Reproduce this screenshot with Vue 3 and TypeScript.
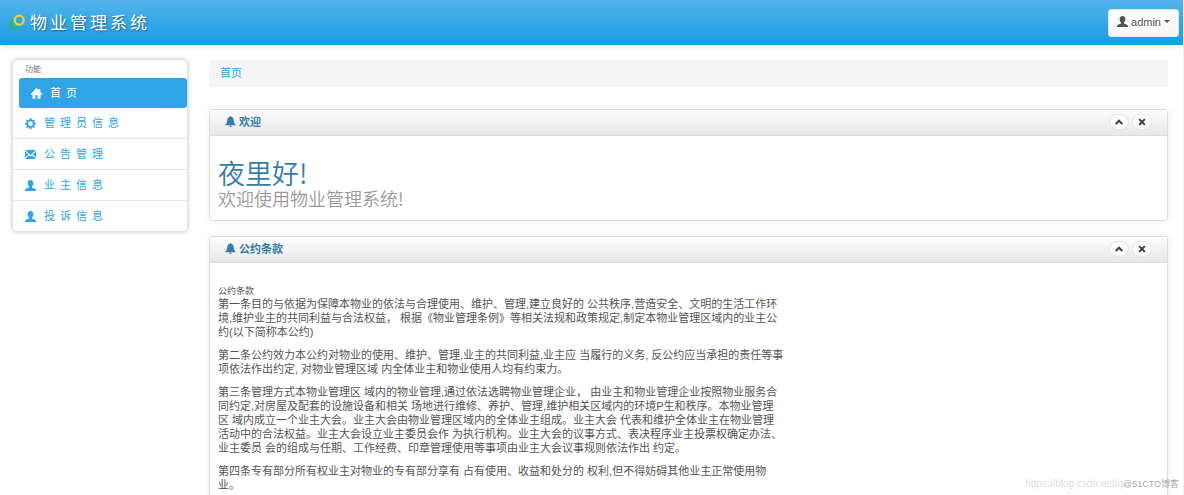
<script setup lang="ts">
import { ref } from 'vue'

type Icon = 'home' | 'cog' | 'mail' | 'user'

interface MenuItem {
  label: string
  icon: Icon
}

const menu: MenuItem[] = [
  { label: '首页', icon: 'home' },
  { label: '管理员信息', icon: 'cog' },
  { label: '公告管理', icon: 'mail' },
  { label: '业主信息', icon: 'user' },
  { label: '投诉信息', icon: 'user' },
]

const shapes: Record<Icon, string> = {
  home: 'M8 0 -0.5 8.8 0.4 9.8H2.2V15.5H6.4V10.4H9.6V15.5H13.8V9.8H15.6L16.5 8.8 13.6 5.8V1.4H11.2V3.3Z',
  cog: 'M6.7 0.5H9.3L9.8 2.7 11 3.2 12.9 2 14.5 3.6 13.3 5.4 13.8 6.7 16 7.1V9.4L13.8 9.9 13.3 11.1 14.5 13 12.9 14.6 11 13.4 9.8 13.9 9.3 16H6.7L6.2 13.9 5 13.4 3.1 14.6 1.5 13 2.7 11.1 2.2 9.9 0 9.4V7.1L2.2 6.7 2.7 5.4 1.5 3.6 3.1 2 5 3.2 6.2 2.7ZM8 4.8A3.4 3.4 0 1 0 8 11.6 3.4 3.4 0 1 0 8 4.8Z',
  mail: 'M0 1.5H16L8 8.6ZM0 3.6 5 8.1 0 12.6ZM16 3.6V12.6L11 8.1ZM6 9.1 8 10.9 10 9.1 16 14.5H0Z',
  user: 'M8 0C10.8 0 12.2 1.9 12.2 4.8 12.2 7 11.2 8.4 10.2 9.5V10.8C12 11.8 16 12.2 16 15V16H0V15C0 12.2 4 11.8 5.8 10.8V9.5C4.8 8.4 3.8 7 3.8 4.8 3.8 1.9 5.2 0 8 0Z',
}

const bell = 'M6.9 1.2A1.1 1.1 0 0 1 9.1 1.2C11.8 2 12.6 4.3 12.8 7 13 9.5 13.6 11 15.4 12.4V13.4H0.6V12.4C2.4 11 3 9.5 3.2 7 3.4 4.3 4.2 2 6.9 1.2ZM6.3 14.2H9.7A1.7 1.7 0 0 1 6.3 14.2Z'
const chevron = 'M8 2.5 16 10.3 13 13.3 8 8.4 3 13.3 0 10.3Z'
const cross = 'M3.6 0.8 8 5.2 12.4 0.8 15.2 3.6 10.8 8 15.2 12.4 12.4 15.2 8 10.8 3.6 15.2 0.8 12.4 5.2 8 0.8 3.6Z'

const rules: string[] = [
  '第一条目的与依据为保障本物业的依法与合理使用、维护、管理,建立良好的 公共秩序,营造安全、文明的生活工作环\n境,维护业主的共同利益与合法权益， 根据《物业管理条例》等相关法规和政策规定,制定本物业管理区域内的业主公\n约(以下简称本公约)',
  '第二条公约效力本公约对物业的使用、维护、管理,业主的共同利益,业主应 当履行的义务, 反公约应当承担的责任等事\n项依法作出约定, 对物业管理区域 内全体业主和物业使用人均有约束力。',
  '第三条管理方式本物业管理区 域内的物业管理,通过依法选聘物业管理企业， 由业主和物业管理企业按照物业服务合\n同约定,对房屋及配套的设施设备和相关 场地进行维修、养护、管理,维护相关区域内的环境P生和秩序。本物业管理\n区 域内成立一个业主大会。业主大会由物业管理区域内的全体业主组成。业主大会 代表和维护全体业主在物业管理\n活动中的合法权益。业主大会设立业主委员会作 为执行机构。业主大会的议事方式、表决程序业主投票权确定办法、\n业主委员 会的组成与任期、工作经费、印章管理使用等事项由业主大会议事规则依法作出 约定。',
  '第四条专有部分所有权业主对物业的专有部分享有 占有使用、收益和处分的 权利,但不得妨碍其他业主正常使用物\n业。',
]

const panels = [
  { id: 'welcome', title: '欢迎' },
  { id: 'rules', title: '公约条款' },
]

const active = ref(0)
const collapsed = ref<string[]>([])
const closed = ref<string[]>([])

function toggle(id: string): void {
  collapsed.value = collapsed.value.includes(id)
    ? collapsed.value.filter((c) => c !== id)
    : [...collapsed.value, id]
}
</script>

<template>
  <div class="page">
    <header class="navbar">
      <a class="brand" href="#">
        <svg class="logo" viewBox="0 0 16 16" aria-hidden="true">
          <circle cx="5.4" cy="10.2" r="4.2" fill="none" stroke="#23bd53" stroke-width="2.2" />
          <circle cx="10.2" cy="6.2" r="4.5" fill="#3aa4df" stroke="#f1cf34" stroke-width="2.2" />
        </svg>
        <span>物业管理系统</span>
      </a>
      <button class="account" type="button">
        <svg class="icon" viewBox="0 0 16 16" aria-hidden="true"><path :d="shapes.user" /></svg>
        <span>admin</span>
        <i class="caret"></i>
      </button>
    </header>

    <div class="columns">
      <nav class="sidebar">
        <h2 class="menu-title">功能</h2>
        <ul class="menu">
          <li v-for="(item, i) in menu" :key="item.label">
            <a href="#" :class="{ active: i === active }" @click.prevent="active = i">
              <svg class="icon" viewBox="0 0 16 16" aria-hidden="true">
                <path :d="shapes[item.icon]" fill-rule="evenodd" />
              </svg>
              <span>{{ item.label }}</span>
            </a>
          </li>
        </ul>
      </nav>

      <main class="content">
        <nav class="breadcrumb"><a href="#">首页</a></nav>

        <template v-for="panel in panels" :key="panel.id">
          <section v-if="!closed.includes(panel.id)" class="panel">
            <div class="panel-head">
              <h2>
                <svg class="icon" viewBox="0 0 16 16" aria-hidden="true"><path :d="bell" /></svg>
                {{ panel.title }}
              </h2>
              <div class="tools">
                <button type="button" aria-label="折叠" @click="toggle(panel.id)">
                  <svg viewBox="0 0 16 16" aria-hidden="true"><path :d="chevron" /></svg>
                </button>
                <button type="button" aria-label="关闭" @click="closed.push(panel.id)">
                  <svg viewBox="0 0 16 16" aria-hidden="true"><path :d="cross" /></svg>
                </button>
              </div>
            </div>
            <div v-if="!collapsed.includes(panel.id)" class="panel-body">
              <h1 v-if="panel.id === 'welcome'">
                夜里好!
                <small>欢迎使用物业管理系统!</small>
              </h1>
              <template v-else>
                <h3>公约条款</h3>
                <p v-for="rule in rules" :key="rule">{{ rule }}</p>
              </template>
            </div>
          </section>
        </template>
      </main>
    </div>

    <div class="watermark"><span>https://blog.csdn.net/q</span><b>@51CTO博客</b></div>
  </div>
</template>

<style>
body {
  margin: 0;
}
</style>

<style scoped>
.page {
  position: relative;
  box-sizing: border-box;
  height: 100vh;
  overflow: hidden;
  border-right: 1px solid #f2f2f2;
  background: #fff;
  color: #555;
  font: 11px/14px "Liberation Sans", "Noto Sans CJK SC", sans-serif;
}
a {
  color: #2fa4e7;
  text-decoration: none;
}
.icon {
  width: 11px;
  height: 11px;
  flex: none;
  fill: currentColor;
  overflow: visible;
}
.navbar {
  display: flex;
  align-items: center;
  justify-content: space-between;
  box-sizing: border-box;
  height: 45px;
  padding: 0 4px 0 9px;
  background: linear-gradient(#54b4eb, #2fa4e7 60%, #1d9ce5);
  box-shadow: 0 1px 8px rgba(0, 0, 0, 0.1);
}
.brand {
  display: flex;
  align-items: center;
  gap: 5px;
  padding-bottom: 2px;
  color: #fff;
  font: 17px/24px KaiTi, "Noto Sans CJK SC", sans-serif;
  letter-spacing: 3px;
  text-shadow: 1px 1px 2px rgba(0, 0, 0, 0.4);
}
.logo {
  width: 16px;
  height: 16px;
}
.account {
  display: flex;
  align-items: center;
  gap: 3px;
  height: 28px;
  padding: 0 8px 2px;
  border: 1px solid #e6e6e6;
  border-radius: 3px;
  background: linear-gradient(#fff, #f6f6f6);
  color: #555;
  font: 11px/14px "Liberation Sans", sans-serif;
}
.caret {
  border: 3px solid transparent;
  border-top-color: #555;
  border-bottom: 0;
}
.columns {
  display: flex;
  align-items: flex-start;
  gap: 22px;
  padding: 15px 15px 0 13px;
}
.sidebar {
  box-sizing: border-box;
  width: 174px;
  flex: none;
  border-radius: 4px;
  box-shadow: 0 0 5px rgba(0, 0, 0, 0.3);
}
.menu-title {
  margin: 0;
  padding: 3px 12px 1px;
  color: #777;
  font-size: 8px;
  font-weight: 400;
  line-height: 14px;
}
.menu {
  margin: 0;
  padding: 0;
  list-style: none;
}
.menu li + li {
  border-bottom: 1px solid #e8e8e8;
}
.menu li:last-child {
  border-bottom: 0;
}
.menu a {
  display: flex;
  align-items: center;
  gap: 8px;
  height: 30px;
  padding-left: 12px;
  letter-spacing: 5px;
}
.menu a.active {
  margin-left: 6px;
  border-radius: 3px;
  background: #2fa4e7;
  color: #fff;
}
.content {
  flex: 1;
  min-width: 0;
}
.breadcrumb {
  margin-bottom: 22px;
  padding: 6px 11px 7px;
  border-radius: 3px;
  background: #f5f5f5;
}
.panel {
  margin-bottom: 15px;
  border: 1px solid #dedede;
  border-radius: 3px;
  box-shadow: 0 0 8px rgba(0, 0, 0, 0.07);
}
.panel-head {
  display: flex;
  align-items: center;
  justify-content: space-between;
  box-sizing: border-box;
  height: 26px;
  padding: 0 15px 2px;
  border-bottom: 1px solid #dedede;
  background: linear-gradient(#fdfdfd, #e7e7e7);
}
.panel-head h2 {
  display: flex;
  align-items: center;
  gap: 3px;
  margin: 0;
  color: #317eac;
  font-size: 11px;
  line-height: 14px;
}
.tools {
  display: flex;
  gap: 3px;
}
.tools button {
  display: grid;
  place-items: center;
  width: 20px;
  height: 16px;
  padding: 0;
  border: 1px solid #e6e6e6;
  border-radius: 8px;
  background: #fbfbfb;
}
.tools svg {
  width: 8px;
  height: 8px;
  fill: #444;
}
.panel-body {
  padding: 22px 8px 12px;
}
h1 {
  margin: 0;
  color: #317eac;
  font-family: "Noto Sans CJK SC", sans-serif;
  font-size: 27px;
  font-weight: 350;
  line-height: 30px;
}
h1 small {
  display: block;
  color: #999;
  font-size: 18px;
  line-height: 20px;
}
h3 {
  margin: 0;
  font-size: 9px;
  font-weight: 400;
  line-height: 12px;
}
.panel-body p {
  margin: 0 0 9px;
  white-space: pre-line;
}
.watermark {
  position: absolute;
  right: 4px;
  bottom: 4px;
  display: flex;
  color: #dedede;
}
.watermark span {
  font-size: 10px;
}
.watermark b {
  color: #aaa;
  font-size: 9px;
  font-weight: 400;
}
</style>
